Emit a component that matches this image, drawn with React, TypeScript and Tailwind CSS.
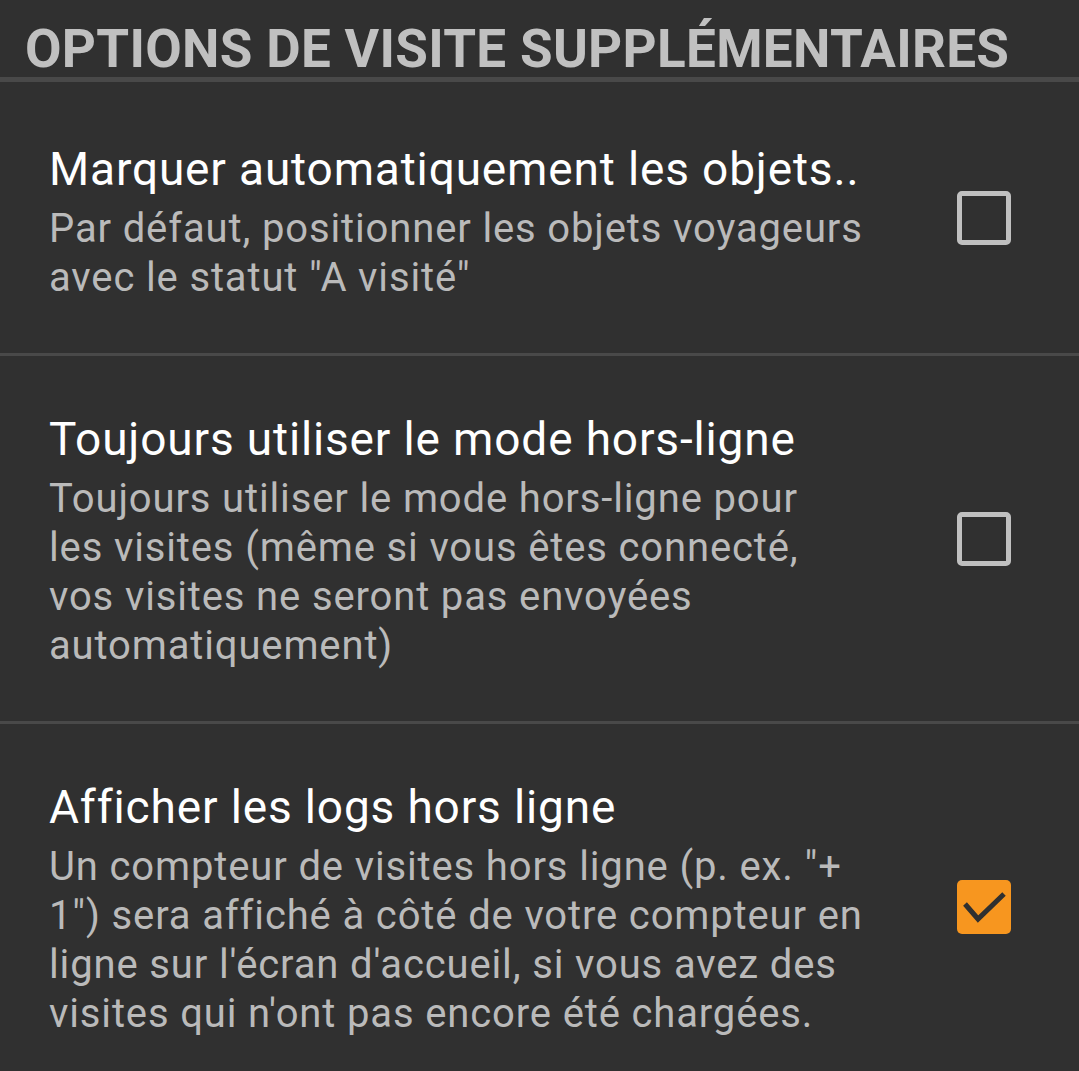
const options = [
  {
    title: 'Marquer automatiquement les objets..',
    lines: ['Par défaut, positionner les objets voyageurs', 'avec le statut "A visité"'],
    checked: false,
  },
  {
    title: 'Toujours utiliser le mode hors-ligne',
    lines: [
      'Toujours utiliser le mode hors-ligne pour',
      'les visites (même si vous êtes connecté,',
      'vos visites ne seront pas envoyées',
      'automatiquement)',
    ],
    checked: false,
  },
  {
    title: 'Afficher les logs hors ligne',
    lines: [
      'Un compteur de visites hors ligne (p. ex. "+',
      '1") sera affiché à côté de votre compteur en',
      "ligne sur l'écran d'accueil, si vous avez des",
      "visites qui n'ont pas encore été chargées.",
    ],
    checked: true,
  },
]

function Checkbox({ checked }: { checked: boolean }) {
  if (checked) {
    return (
      <div className="w-[54px] h-[54px] rounded-[5px] bg-[#f7961f] shrink-0 self-center">
        <svg width="54" height="54" viewBox="0 0 54 54">
          <polyline points="8,24 21,39 47,14" fill="none" stroke="#303030" strokeWidth="5" />
        </svg>
      </div>
    )
  }
  return <div className="w-[54px] h-[54px] rounded-[5px] border-[5px] border-[#c0c0c0] shrink-0 self-center" />
}

export default function App() {
  return (
    <div className="min-h-screen bg-[#303030] font-['Roboto',sans-serif]">
      <div className="border-b-[5px] border-[#494949] pl-[25px] pt-[23px] pb-[1px]">
        <h1 className="text-[53px] leading-[53px] font-bold tracking-[0.3px] text-[#c0c0c0] whitespace-nowrap">
          OPTIONS DE VISITE SUPPLÉMENTAIRES
        </h1>
      </div>
      {options.map((opt, i) => (
        <div key={i} className="flex pl-[49px] pr-[68px] border-b-[3px] border-[#494949]">
          <div className={`flex-1 whitespace-nowrap pb-[51px] ${i === 0 ? 'pt-[59px]' : 'pt-[55px]'}`}>
            <div className="text-[46px] leading-[56px] tracking-[0.85px] text-white">{opt.title}</div>
            <div className="mt-[7px] text-[40px] leading-[49px] tracking-[0.86px] text-[#bababa]">
              {opt.lines.map((l, j) => (
                <div key={j}>{l}</div>
              ))}
            </div>
          </div>
          <Checkbox checked={opt.checked} />
        </div>
      ))}
    </div>
  )
}
